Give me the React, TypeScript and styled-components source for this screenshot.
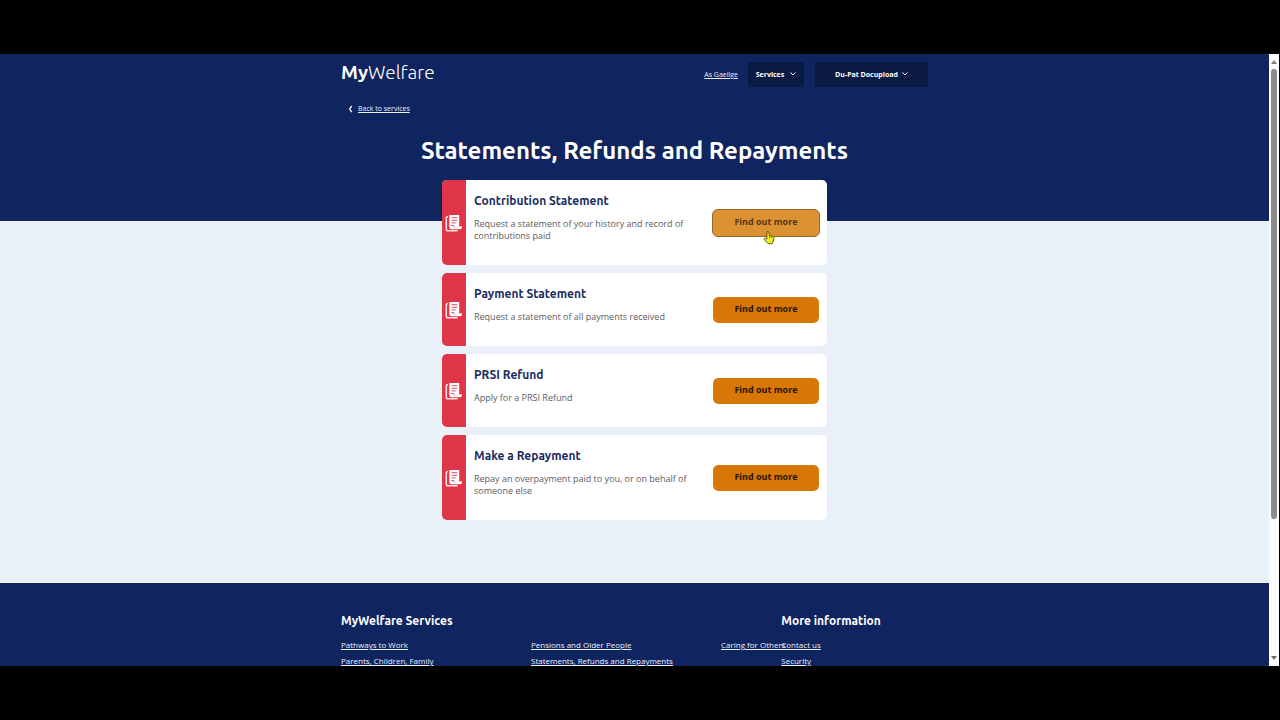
import React from "react";
import styled, { createGlobalStyle, css } from "styled-components";

const navy = "#10245f";
const headingFont = `Ubuntu, "Noto Sans", "Open Sans", sans-serif`;
const bodyFont = `"Open Sans", "Noto Sans", sans-serif`;

const GlobalStyle = createGlobalStyle`
  *, *::before, *::after { box-sizing: border-box; }
  body { margin: 0; background: #000; font-family: ${bodyFont}; }
  h1, h2, h3, p, ul { margin: 0; padding: 0; }
  ul { list-style: none; }
  button { font-family: inherit; cursor: pointer; }
`;

const Screen = styled.div`
  display: flex;
  height: 100vh;
  padding: 54px 1px 54px 0;
  background: #000;
`;

const Page = styled.div`
  flex: 1;
  min-width: 0;
  overflow: hidden;
  background: #e9f0f8;
`;

const Container = styled.div`
  width: 100%;
  max-width: 587px;
  margin: 0 auto;
`;

const Hero = styled.header`
  height: 167px;
  background: ${navy};
`;

const TopBar = styled.div`
  display: flex;
  align-items: flex-start;
  padding-top: 8px;
`;

const Logo = styled.a`
  margin-right: auto;
  color: #fff;
  font-family: ${headingFont};
  font-size: 19px;
  font-weight: 300;
  line-height: 20px;
  text-decoration: none;

  strong { font-weight: 700; }
`;

const TextLink = styled.a<{ $small?: boolean }>`
  color: #e8effc;
  font-size: ${(p) => (p.$small ? "7px" : "8px")};
  line-height: 16px;
  text-decoration: underline;
  white-space: nowrap;
`;

const LanguageLink = styled(TextLink)`
  margin: 5px 10px 0 0;
`;

const NavButton = styled.button<{ $wide?: boolean }>`
  display: flex;
  align-items: center;
  justify-content: center;
  gap: ${(p) => (p.$wide ? "4px" : "6px")};
  width: ${(p) => (p.$wide ? "113px" : "56px")};
  height: 25px;
  margin-left: ${(p) => (p.$wide ? "11px" : "0")};
  padding: 0 0 1px;
  border: 0;
  border-radius: 1px;
  background: #0a1a42;
  color: #fff;
  font-size: 7px;
  font-weight: 700;
  white-space: nowrap;
`;

const BackRow = styled.nav`
  display: flex;
  align-items: center;
  gap: 5px;
  padding: 14px 0 0 7px;
`;

const Title = styled.h1`
  margin-top: 18px;
  color: #fff;
  font-family: ${headingFont};
  font-size: 24px;
  font-weight: 700;
  line-height: 32px;
  text-align: center;
  white-space: nowrap;
`;

const Main = styled.main`
  padding-bottom: 63px;
`;

const CardList = styled.ul`
  position: relative;
  display: flex;
  flex-direction: column;
  gap: 8px;
  max-width: 385px;
  margin: -41px auto 0;
`;

const Card = styled.li`
  display: flex;
  border-radius: 5px;
  background: #fff;
`;

const CardStrip = styled.div`
  display: flex;
  flex: 0 0 24px;
  align-items: center;
  justify-content: center;
  border-radius: 5px 0 0 5px;
  background: #de3648;
`;

const CardText = styled.div`
  flex: 1;
  min-width: 0;
  padding: 13px 16px 23px 8px;
`;

const CardTitle = styled.h2`
  color: #1a2b63;
  font-family: ${headingFont};
  font-size: 12px;
  font-weight: 700;
  line-height: 16px;
`;

const CardDescription = styled.p`
  margin-top: 9px;
  color: #5c5c5c;
  font-size: 9px;
  line-height: 12px;
`;

const CardAction = styled.div`
  position: relative;
  align-self: center;
  flex: 0 0 auto;
  padding-right: 7px;
`;

const ActionButton = styled.button<{ $hovered?: boolean }>`
  display: block;
  width: 108px;
  height: 28px;
  padding: 0 0 2px;
  border: 1px solid #fff;
  border-radius: 6px;
  background: #d67706;
  background-clip: padding-box;
  color: #2a1405;
  font-size: 9px;
  font-weight: 700;
  ${(p) =>
    p.$hovered &&
    css`
      border-color: #8f6a35;
      background: #dc9233;
      color: #553612;
    `}
`;

const Pointer = styled.svg`
  position: absolute;
  top: 21px;
  left: 51px;
`;

const Footer = styled.footer`
  min-height: 160px;
  padding-top: 30px;
  background: ${navy};
`;

const FooterColumns = styled(Container)`
  display: grid;
  grid-template-columns: 3fr 1fr;
`;

const FooterSection = styled.section`
  min-width: 0;
`;

const FooterTitle = styled.h3`
  margin-bottom: 8px;
  color: #fff;
  font-family: ${headingFont};
  font-size: 12px;
  font-weight: 700;
  line-height: 16px;
  white-space: nowrap;
`;

const FooterLinks = styled.ul<{ $columns: number }>`
  display: grid;
  grid-template-columns: repeat(${(p) => p.$columns}, 190px);
  grid-auto-rows: 16px;

  li { display: flex; }
`;

const ScrollTrack = styled.div`
  display: flex;
  flex: 0 0 10px;
  flex-direction: column;
  align-items: center;
  padding: 6px 0;
  background: #fcfcfc;
`;

const ScrollThumb = styled.div`
  width: 6px;
  height: 75%;
  margin: 5px 0 auto;
  border-radius: 3px;
  background: #8b8b8b;
`;

const Chevron = () => (
  <svg width="6" height="4" viewBox="0 0 6 4" fill="none" stroke="#fff" aria-hidden="true">
    <path d="M.5.5 3 3 5.5.5" />
  </svg>
);

const BackChevron = () => (
  <svg width="5" height="8" viewBox="0 0 5 8" fill="none" stroke="#fff" strokeWidth="1.3" aria-hidden="true">
    <path d="M3.8.8 1.600 4 3.800 7.200" />
  </svg>
);

const DocumentIcon = () => (
  <svg width="18" height="18" viewBox="0 0 18 18" aria-hidden="true">
    <path d="M3 2.700H2.200a.9.9 0 0 0-.9.9v11.700A1.500 1.500 0 0 0 2.800 16.800H12.500" fill="none" stroke="#fbe3e6" strokeWidth="1.500" />
    <path d="M4.300.9H14.200V12.600H17v.8a2 2 0 0 1-2 1.800H6.300a2 2 0 0 1-2-2z" fill="#fff" />
    <path d="M6.500 3.700h5.800M6.500 6.300h5.800M6.500 8.900h4.200M6.500 11.500h2.600" fill="none" stroke="#de3648" strokeWidth=".9" />
    <path d="M9.200 12.200v1.500" fill="none" stroke="#de3648" strokeWidth=".7" />
  </svg>
);

const services = [
  {
    title: "Contribution Statement",
    description: "Request a statement of your history and record of contributions paid",
    hovered: true,
  },
  { title: "Payment Statement", description: "Request a statement of all payments received" },
  { title: "PRSI Refund", description: "Apply for a PRSI Refund" },
  {
    title: "Make a Repayment",
    description: "Repay an overpayment paid to you, or on behalf of someone else",
  },
];

const serviceLinks = [
  "Pathways to Work",
  "Pensions and Older People",
  "Caring for Others",
  "Parents, Children, Family",
  "Statements, Refunds and Repayments",
];

const infoLinks = ["Contact us", "Security"];

export default function App() {
  return (
    <Screen>
      <GlobalStyle />
      <Page>
        <Hero>
          <Container>
            <TopBar>
              <Logo href="#home">
                <strong>My</strong>Welfare
              </Logo>
              <LanguageLink href="#ga" $small>
                As Gaeilge
              </LanguageLink>
              <NavButton type="button">
                Services <Chevron />
              </NavButton>
              <NavButton type="button" $wide>
                Du-Pat Docupload <Chevron />
              </NavButton>
            </TopBar>
            <BackRow>
              <BackChevron />
              <TextLink href="#services" $small>
                Back to services
              </TextLink>
            </BackRow>
            <Title>Statements, Refunds and Repayments</Title>
          </Container>
        </Hero>
        <Main>
          <CardList>
            {services.map((service) => (
              <Card key={service.title}>
                <CardStrip>
                  <DocumentIcon />
                </CardStrip>
                <CardText>
                  <CardTitle>{service.title}</CardTitle>
                  <CardDescription>{service.description}</CardDescription>
                </CardText>
                <CardAction>
                  <ActionButton type="button" $hovered={service.hovered}>
                    Find out more
                  </ActionButton>
                  {service.hovered && (
                    <Pointer width="12" height="15" viewBox="0 0 12 15" aria-hidden="true">
                      <path
                        d="M4 1.500c.7-.6 1.500-.2 1.700.5l.8 3.400 3.300.9c1 .3 1.400 1 1.200 2l-.8 3.400-1.200 2H5.200L1.200 9.500C.7 8.600 1.700 7.800 2.500 8.300l1.300.9z"
                        fill="#f4ee12"
                        stroke="#4f4a10"
                        strokeWidth=".9"
                        strokeLinejoin="round"
                      />
                      <path d="M6.500 5.600v2.200M8.300 6v2" stroke="#4f4a10" strokeWidth=".6" />
                    </Pointer>
                  )}
                </CardAction>
              </Card>
            ))}
          </CardList>
        </Main>
        <Footer>
          <FooterColumns>
            <FooterSection>
              <FooterTitle>MyWelfare Services</FooterTitle>
              <FooterLinks $columns={3}>
                {serviceLinks.map((label) => (
                  <li key={label}>
                    <TextLink href="#service">{label}</TextLink>
                  </li>
                ))}
              </FooterLinks>
            </FooterSection>
            <FooterSection>
              <FooterTitle>More information</FooterTitle>
              <FooterLinks $columns={1}>
                {infoLinks.map((label) => (
                  <li key={label}>
                    <TextLink href="#info">{label}</TextLink>
                  </li>
                ))}
              </FooterLinks>
            </FooterSection>
          </FooterColumns>
        </Footer>
      </Page>
      <ScrollTrack aria-hidden="true">
        <svg width="6" height="4" viewBox="0 0 6 4">
          <path d="M3 0 6 4H0z" fill="#7d7d7d" />
        </svg>
        <ScrollThumb />
        <svg width="6" height="4" viewBox="0 0 6 4">
          <path d="M0 0h6L3 4z" fill="#6d6d6d" />
        </svg>
      </ScrollTrack>
    </Screen>
  );
}
